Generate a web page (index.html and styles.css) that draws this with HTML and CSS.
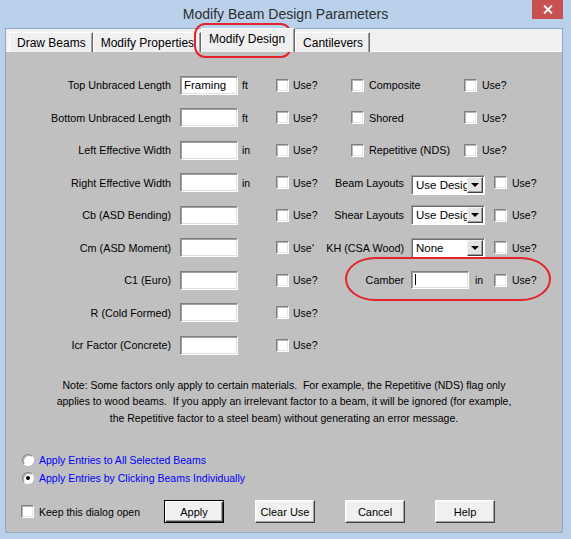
FILE: index.html
```html
<!DOCTYPE html>
<html>
<head>
<meta charset="utf-8">
<title>Modify Beam Design Parameters</title>
<link rel="stylesheet" href="styles.css">
</head>
<body>
<div class="window">
  <div class="titlebar">
    <span class="title">Modify Beam Design Parameters</span>
    <span class="close"><svg width="10" height="9" viewBox="0 0 10 9"><path d="M1 0.5 L9 8.5 M9 0.5 L1 8.5" stroke="#fff" stroke-width="1.8"/></svg></span>
  </div>
  <div class="client">
    <div class="tabs">
      <div class="tab">Draw Beams</div>
      <div class="tab">Modify Properties</div>
      <div class="tab active">Modify Design</div>
      <div class="tab">Cantilevers</div>
    </div>
    <div class="panel">
      <div class="fields">
        <div class="left-grid">
          <span class="lbl">Top Unbraced Length</span><span class="textbox"><span class="val">Framing</span></span><span class="unit">ft</span><span class="use"><span class="check"></span><span>Use?</span></span>
          <span class="lbl">Bottom Unbraced Length</span><span class="textbox"></span><span class="unit">ft</span><span class="use"><span class="check"></span><span>Use?</span></span>
          <span class="lbl">Left Effective Width</span><span class="textbox"></span><span class="unit">in</span><span class="use"><span class="check"></span><span>Use?</span></span>
          <span class="lbl">Right Effective Width</span><span class="textbox"></span><span class="unit">in</span><span class="use"><span class="check"></span><span>Use?</span></span>
          <span class="lbl">Cb (ASD Bending)</span><span class="textbox"></span><span class="unit"></span><span class="use"><span class="check"></span><span>Use?</span></span>
          <span class="lbl">Cm (ASD Moment)</span><span class="textbox"></span><span class="unit"></span><span class="use"><span class="check"></span><span class="clip">Use?</span></span>
          <span class="lbl">C1 (Euro)</span><span class="textbox"></span><span class="unit"></span><span class="use"><span class="check"></span><span>Use?</span></span>
          <span class="lbl">R (Cold Formed)</span><span class="textbox"></span><span class="unit"></span><span class="use"><span class="check"></span><span>Use?</span></span>
          <span class="lbl">Icr Factor (Concrete)</span><span class="textbox"></span><span class="unit"></span><span class="use"><span class="check"></span><span>Use?</span></span>
        </div>
        <div class="right-grid">
          <div class="flagrow"><span class="check"></span><span class="flag">Composite</span><span class="check"></span><span>Use?</span></div>
          <div class="flagrow"><span class="check"></span><span class="flag">Shored</span><span class="check"></span><span>Use?</span></div>
          <div class="flagrow"><span class="check"></span><span class="flag">Repetitive (NDS)</span><span class="check"></span><span>Use?</span></div>

          <span class="rlbl">Beam Layouts</span>
          <span class="ctl"><span class="select low"><span class="sel-text">Use Design</span><span class="arrow"></span></span></span>
          <span class="check"></span><span>Use?</span>

          <span class="rlbl">Shear Layouts</span>
          <span class="ctl"><span class="select"><span class="sel-text">Use Design</span><span class="arrow"></span></span></span>
          <span class="check"></span><span>Use?</span>

          <span class="rlbl">KH (CSA Wood)</span>
          <span class="ctl"><span class="select"><span class="sel-text">None</span><span class="arrow"></span></span></span>
          <span class="check"></span><span>Use?</span>

          <span class="rlbl">Camber</span>
          <span class="ctl"><span class="textbox short"><span class="caret"></span></span><span class="unit-in">in</span></span>
          <span class="check"></span><span>Use?</span>
        </div>
      </div>
      <p class="note">Note: Some factors only apply to certain materials.&nbsp; For example, the Repetitive (NDS) flag only<br>applies to wood beams.&nbsp; If you apply an irrelevant factor to a beam, it will be ignored (for example,<br>the Repetitive factor to a steel beam) without generating an error message.</p>
      <div class="radios">
        <div class="radio-row"><span class="radio"></span><span class="rtext">Apply Entries to All Selected Beams</span></div>
        <div class="radio-row"><span class="radio on"></span><span class="rtext">Apply Entries by Clicking Beams Individually</span></div>
      </div>
      <div class="actions">
        <span class="check"></span><span class="keep">Keep this dialog open</span>
        <button class="btn default">Apply</button>
        <button class="btn">Clear Use</button>
        <button class="btn">Cancel</button>
        <button class="btn">Help</button>
      </div>
    </div>
  </div>
  <div class="mark mark-tab"></div>
  <div class="mark mark-camber"></div>
</div>
</body>
</html>
```
FILE: styles.css
```css
* { box-sizing: border-box; }
html, body { margin: 0; padding: 0; }
body {
  background: #b9d1ea;
  font-family: "Liberation Sans", Arial, sans-serif;
  font-size: 10.5px;
  color: #000;
}
.window {
  position: relative;
  width: 571px;
  height: 539px;
  background: #b9d1ea;
  overflow: hidden;
}
.titlebar {
  height: 28px;
  display: grid;
  grid-template-columns: 1fr auto 1fr;
}
.title {
  grid-column: 2;
  font-size: 14px;
  color: #2e2e2e;
  padding-top: 6px;
  line-height: 16px;
}
.close {
  grid-column: 3;
  justify-self: end;
  margin-right: 8px;
  width: 31px;
  height: 19px;
  background: #c75050;
  display: flex;
  align-items: center;
  justify-content: center;
}
.client {
  margin-left: 5px;
  width: 558px;
  height: 505px;
  border: 1px solid #93a9c2;
  display: flex;
  flex-direction: column;
  background: #f0f0f0;
}
.tabs {
  height: 23px;
  flex: none;
  display: flex;
  align-items: flex-end;
  padding-left: 3px;
  border-bottom: 1px solid #fff;
  background: #f0f0f0;
  font-size: 12px;
}
.tab {
  height: 20px;
  margin-bottom: -1px;
  padding: 2px 6px 0 7px;
  line-height: 16px;
  background: #f0f0f0;
  border-top: 1px solid #fff;
  border-left: 1px solid #fff;
  border-right: 1px solid #696969;
  box-shadow: inset -1px 0 0 #a0a0a0;
  white-space: nowrap;
}
.tab.active {
  height: 24px;
  padding: 2px 9px 0 7px;
  position: relative;
  z-index: 1;
}
.panel {
  flex: 1;
  background: #c0c0c0;
  position: relative;
}
.fields {
  display: flex;
  padding-top: 17px;
}
.left-grid {
  width: 322px;
  display: grid;
  grid-template-columns: 174px 58px 38px 48px;
  grid-auto-rows: 32.5px;
  align-items: center;
}
.lbl {
  text-align: right;
  padding-right: 9px;
  white-space: nowrap;
  font-size: 10.8px;
}
.textbox {
  display: block;
  width: 58px;
  height: 19px;
  background: #fff;
  border-style: solid;
  border-width: 1px;
  border-color: #808080 #fff #fff #808080;
  box-shadow: inset 1px 1px 0 #a0a0a0, inset -1px -1px 0 #dfdfdf;
  padding: 1px 0 0 3px;
  line-height: 15px;
  font-size: 11.5px;
}
.textbox.short { height: 18px; position: relative; }
.caret {
  display: block;
  width: 1px;
  height: 11px;
  background: #000;
  margin-top: 1px;
}
.unit { padding-left: 4px; }
.use {
  display: flex;
  align-items: center;
  gap: 4px;
  white-space: nowrap;
}
.use .clip {
  display: block;
  width: 21px;
  overflow: hidden;
}
.check {
  display: block;
  flex: none;
  width: 13px;
  height: 13px;
  background: #fff;
  border-style: solid;
  border-width: 1px;
  border-color: #808080 #fff #fff #808080;
  box-shadow: inset 1px 1px 0 #b4b4b4, inset -1px -1px 0 #e6e6e6;
}
.right-grid {
  display: grid;
  grid-template-columns: 83px 83px 18px auto;
  grid-auto-rows: 32.5px;
  align-items: center;
}
.flagrow {
  grid-column: 1 / -1;
  display: flex;
  align-items: center;
  padding-left: 23px;
  white-space: nowrap;
}
.flagrow .flag {
  width: 100px;
  padding-left: 5px;
  font-size: 10.8px;
}
.flagrow .flag + .check { margin-right: 5px; }
.rlbl {
  display: flex;
  justify-content: flex-end;
  padding-right: 7px;
  white-space: nowrap;
  font-size: 10.8px;
}
.ctl {
  display: flex;
  align-items: center;
}
.unit-in { margin-left: 6px; }
.select {
  display: flex;
  width: 74px;
  height: 20px;
  background: #fff;
  border-style: solid;
  border-width: 1px;
  border-color: #9a9a9a #fff #fff #9a9a9a;
  box-shadow: inset 1px 1px 0 #6e6e6e;
  padding: 1px;
  font-size: 11.5px;
}
.select.low { margin-top: 5px; }
.sel-text {
  flex: 1;
  overflow: hidden;
  white-space: nowrap;
  padding-left: 3px;
  line-height: 17px;
}
.arrow {
  flex: none;
  width: 16px;
  height: 16px;
  background: #e3e3e3;
  border-style: solid;
  border-width: 1px;
  border-color: #f4f4f4 #404040 #404040 #f4f4f4;
  box-shadow: inset -1px -1px 0 #a0a0a0;
  position: relative;
}
.arrow::after {
  content: "";
  position: absolute;
  left: 3px;
  top: 5px;
  border-left: 4px solid transparent;
  border-right: 4px solid transparent;
  border-top: 4px solid #000;
}
.note {
  margin: 15px auto 0;
  text-align: center;
  line-height: 16.5px;
  white-space: nowrap;
}
.radios {
  margin-top: 25px;
  padding-left: 16px;
}
.radio-row {
  height: 18px;
  display: flex;
  align-items: center;
}
.radio {
  width: 12px;
  height: 12px;
  border-radius: 50%;
  background: #fff;
  border: 1px solid;
  border-color: #808080 #fff #fff #808080;
  box-shadow: inset 1px 1px 0 #b0b0b0;
  display: flex;
  align-items: center;
  justify-content: center;
}
.radio.on::after {
  content: "";
  width: 4px;
  height: 4px;
  border-radius: 50%;
  background: #000;
}
.rtext {
  margin-left: 5px;
  color: #0000ff;
}
.actions {
  margin-top: 13px;
  padding-left: 15px;
  display: flex;
  align-items: center;
  height: 23px;
}
.keep {
  width: 125px;
  margin-left: 5px;
  white-space: nowrap;
}
.btn {
  width: 60px;
  height: 23px;
  margin: 0 30px 0 0;
  padding: 0;
  font-family: "Liberation Sans", Arial, sans-serif;
  font-size: 11px;
  color: #000;
  background: #f0f0f0;
  border-style: solid;
  border-width: 1px;
  border-color: #fff #404040 #404040 #fff;
  box-shadow: inset -1px -1px 0 #a0a0a0, inset 1px 1px 0 #f7f7f7;
}
.btn.default {
  border: 1px solid #000;
  box-shadow: inset 1px 1px 0 #fff, inset -1px -1px 0 #404040, inset -2px -2px 0 #a0a0a0;
  margin-right: 31px;
}
.mark {
  position: absolute;
  border: 2.5px solid #e3222a;
  pointer-events: none;
}
.mark-tab {
  left: 194px;
  top: 23px;
  width: 98px;
  height: 35px;
  border-radius: 11px / 12px;
}
.mark-camber {
  left: 345px;
  top: 257px;
  width: 206px;
  height: 44px;
  border-radius: 30px / 22px;
}
```
